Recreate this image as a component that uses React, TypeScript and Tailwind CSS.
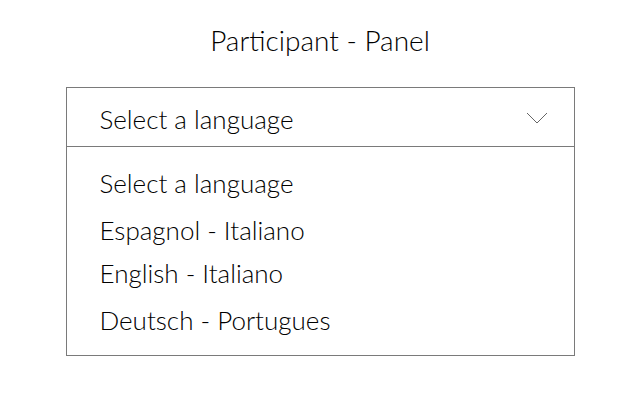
import React from "react";

export default function App() {
  const items = [
    { label: "Select a language", cls: "h-[46px]" },
    { label: "Espagnol - Italiano", cls: "h-[47px]" },
    { label: "English - Italiano", cls: "h-[40px]" },
    { label: "Deutsch - Portugues", cls: "h-[54px]" },
  ];
  return (
    <div
      className="w-[640px] h-[400px] bg-white text-black flex flex-col items-center"
      style={{ fontFamily: "Lato, 'Noto Sans', sans-serif" }}
    >
      <div className="mt-[24px] h-[32px] text-[28px] font-light leading-[32px]">Participant - Panel</div>
      <div className="mt-[31px] w-[509px] h-[269px] border border-[#7a7a7a] flex flex-col">
        <div className="h-[59px] shrink-0 border-b border-[#7a7a7a] flex items-center pt-[4px] pl-[33px] pr-[26px]">
          <span className="flex-1 text-[26px] font-light leading-[30px]">Select a language</span>
          <svg width="22" height="12" viewBox="0 0 22 12" fill="none" className="-mt-[3px]">
            <path d="M1 1 L11 11 L21 1" stroke="#666" strokeWidth="1" />
          </svg>
        </div>
        <div className="flex flex-col pl-[33px] pt-[13px]">
          {items.map((it) => (
            <div key={it.label} className={`${it.cls} flex items-center text-[26px] font-light leading-[30px]`}>
              {it.label}
            </div>
          ))}
        </div>
      </div>
    </div>
  );
}
